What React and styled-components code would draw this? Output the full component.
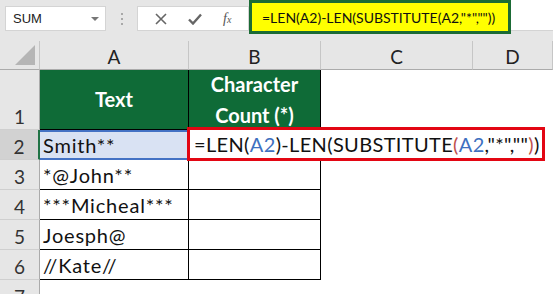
import styled, { createGlobalStyle } from "styled-components";

const Global = createGlobalStyle`
  html, body {
    margin: 0;
    padding: 0;
    background: #fff;
  }
  body {
    width: 553px;
    height: 294px;
    overflow: hidden;
    font-family: 'Lato', 'Liberation Sans', sans-serif;
  }
`;

const Page = styled.div`
  width: 553px;
  height: 294px;
  overflow: hidden;
  background: #e6e6e6;
`;

const Toolbar = styled.div`
  height: 34px;
  display: flex;
  align-items: flex-start;
  background: #e6e6e6;

  & > * {
    flex-shrink: 0;
  }
`;

const NameBox = styled.div`
  margin: 6px 0 0 5px;
  width: 101px;
  height: 25px;
  box-sizing: border-box;
  background: #fff;
  border: 1px solid #d4d4d4;
  display: flex;
  align-items: center;
  justify-content: space-between;
  padding: 0 6px 0 7px;
  font-family: 'Liberation Sans', sans-serif;
  font-size: 13px;
  color: #222;
`;

const Caret = styled.span`
  width: 0;
  height: 0;
  border-left: 4px solid transparent;
  border-right: 4px solid transparent;
  border-top: 4px solid #777;
`;

const Grip = styled.div`
  width: 31px;
  height: 31px;
  display: flex;
  flex-direction: column;
  align-items: center;
  justify-content: center;
  gap: 3px;
  margin-top: 3px;

  span {
    width: 2px;
    height: 2px;
    background: #a8a8a8;
  }
`;

const ButtonBox = styled.div`
  margin-top: 6px;
  width: 112px;
  height: 25px;
  box-sizing: border-box;
  background: #fff;
  border: 1px solid #d4d4d4;
  display: flex;
  align-items: center;
  justify-content: space-around;
  padding: 0 6px;
`;

const Fx = styled.span`
  font-family: 'Liberation Serif', serif;
  font-style: italic;
  font-size: 14px;
  color: #555;

  sub {
    font-size: 10px;
    vertical-align: 0;
  }
`;

const FormulaBox = styled.div`
  width: 262px;
  height: 34px;
  box-sizing: border-box;
  background: #ffff00;
  border: 3px solid #1b6b35;
  display: flex;
  align-items: center;
  padding-left: 10px;
  font-family: 'Lato', sans-serif;
  font-size: 14px;
  color: #111;
  white-space: nowrap;
`;

const FormulaRest = styled.div`
  flex: 1;
  height: 31px;
  box-sizing: border-box;
  background: #fff;
  border-bottom: 1px solid #d4d4d4;
`;

const Sheet = styled.div`
  margin-top: 7px;
  display: grid;
  grid-template-columns: 40px 149px 132px 152px 80px;
  grid-template-rows: 29px 60px repeat(6, 30px);
  background: #fff;
`;

const Corner = styled.div`
  background: #e6e6e6;
  border-right: 1px solid #c6c6c6;
  border-bottom: 1px solid #ababab;
  box-sizing: border-box;
  position: relative;

  &::after {
    content: '';
    position: absolute;
    right: 4px;
    bottom: 4px;
    width: 0;
    height: 0;
    border-left: 20px solid transparent;
    border-bottom: 20px solid #b5b5b5;
  }
`;

const ColHead = styled.div`
  background: #e6e6e6;
  border-right: 1px solid #c6c6c6;
  border-bottom: 1px solid #ababab;
  box-sizing: border-box;
  display: flex;
  align-items: center;
  justify-content: center;
  font-family: 'Lato', sans-serif;
  font-size: 19px;
  color: #222;
  padding-top: 2px;
`;

const RowHead = styled.div`
  background: ${(p) => (p.$active ? "#d2d2d2" : "#e6e6e6")};
  border-right: ${(p) => (p.$active ? "2px solid #1f7244" : "1px solid #ababab")};
  border-bottom: 1px solid #cfcfcf;
  box-sizing: border-box;
  display: flex;
  align-items: flex-end;
  justify-content: center;
  padding-bottom: 1px;
  font-family: 'Lato', sans-serif;
  font-size: 19px;
  color: #333;
`;

const HeadCell = styled.div`
  background: #0f6b37;
  color: #fff;
  font-family: 'Lato', sans-serif;
  font-weight: 700;
  font-size: 20px;
  line-height: 31px;
  text-align: center;
  display: flex;
  align-items: center;
  justify-content: center;
  border-right: 1px solid #000;
  border-bottom: 1px solid #000;
  box-sizing: border-box;
`;

const Cell = styled.div`
  position: relative;
  box-sizing: border-box;
  border-right: ${(p) => (p.$table ? "1px solid #000" : "none")};
  border-bottom: ${(p) => (p.$table ? "1px solid #000" : "none")};
  background: ${(p) => (p.$selected ? "#d9e2f3" : "#fff")};
  display: flex;
  align-items: center;
  padding-left: 3px;
  font-family: 'Lato', sans-serif;
  font-size: 20px;
  letter-spacing: 0.8px;
  color: #111;
  white-space: nowrap;

  ${(p) =>
    p.$selected &&
    `
    border-top: 2px solid #4472c4;
    border-bottom: 2px solid #4472c4;
  `}
`;

const EditBox = styled.div`
  position: absolute;
  left: -2px;
  top: -3px;
  width: 358px;
  height: 34px;
  box-sizing: border-box;
  border: 3px solid #e30613;
  background: #fff;
  display: flex;
  align-items: center;
  padding-left: 4px;
  font-family: 'Lato', sans-serif;
  font-size: 20px;
  letter-spacing: 0.35px;
  color: #111;
  white-space: nowrap;
  z-index: 2;
`;

const Ref = styled.span`
  color: #3e70c0;
`;

const Paren = styled.span`
  color: #c0504d;
`;

function XIcon() {
  return (
    <svg width="12" height="12" viewBox="0 0 12 12">
      <path d="M1 1 L11 11 M11 1 L1 11" stroke="#666" strokeWidth="1.6" fill="none" />
    </svg>
  );
}

function CheckIcon() {
  return (
    <svg width="14" height="12" viewBox="0 0 14 12">
      <path d="M1 6.5 L5 10.5 L13 1.5" stroke="#666" strokeWidth="2.4" fill="none" />
    </svg>
  );
}

const rows = [
  { n: 3, text: "*@John**" },
  { n: 4, text: "***Micheal***" },
  { n: 5, text: "Joesph@" },
  { n: 6, text: "//Kate//" },
];

export default function App() {
  return (
    <Page>
      <Global />
      <Toolbar>
        <NameBox>
          SUM
          <Caret />
        </NameBox>
        <Grip>
          <span />
          <span />
          <span />
        </Grip>
        <ButtonBox>
          <XIcon />
          <CheckIcon />
          <Fx>
            f<sub>x</sub>
          </Fx>
        </ButtonBox>
        <FormulaBox>=LEN(A2)-LEN(SUBSTITUTE(A2,"*",""))</FormulaBox>
        <FormulaRest />
      </Toolbar>

      <Sheet>
        <Corner />
        <ColHead>A</ColHead>
        <ColHead>B</ColHead>
        <ColHead>C</ColHead>
        <ColHead>D</ColHead>

        <RowHead>1</RowHead>
        <HeadCell>Text</HeadCell>
        <HeadCell>
          Character
          <br />
          Count (*)
        </HeadCell>
        <Cell />
        <Cell />

        <RowHead $active>2</RowHead>
        <Cell $table $selected>Smith**</Cell>
        <Cell $table>
          <EditBox>
            =LEN(<Ref>A2</Ref>)-LEN(SUBSTITUTE<Paren>(</Paren>
            <Ref>A2</Ref>,"*",""<Paren>)</Paren>)
          </EditBox>
        </Cell>
        <Cell />
        <Cell />

        {rows.map((r) => (
          <>
            <RowHead key={"h" + r.n}>{r.n}</RowHead>
            <Cell $table>{r.text}</Cell>
            <Cell $table />
            <Cell />
            <Cell />
          </>
        ))}

        <RowHead>7</RowHead>
        <Cell />
        <Cell />
        <Cell />
        <Cell />
      </Sheet>
    </Page>
  );
}
